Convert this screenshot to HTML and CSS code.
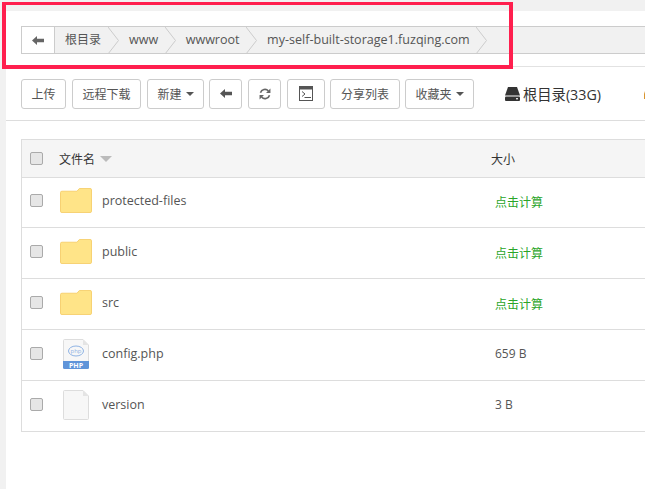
FILE: index.html
```html
<!DOCTYPE html>
<html lang="zh">
<head>
<meta charset="utf-8">
<title>文件管理</title>
<link rel="stylesheet" href="styles.css">
</head>
<body>
<div class="page">
  <nav class="crumbs">
    <button class="crumb-back"><svg width="12" height="9" viewBox="0 0 12 9"><path d="M0 4.500 5 0V2.800H12V6.200H5V9Z" fill="#666"/></svg></button>
    <ol class="crumb-list">
      <li class="crumb"><span class="crumb-cn">根目录</span><svg class="chev" width="11" height="27" viewBox="0 0 11 27"><path d="M0 0 10.500 13.500 0 27" fill="none" stroke="#ccc"/></svg></li>
      <li class="crumb"><span>www</span><svg class="chev" width="11" height="27" viewBox="0 0 11 27"><path d="M0 0 10.500 13.500 0 27" fill="none" stroke="#ccc"/></svg></li>
      <li class="crumb"><span>wwwroot</span><svg class="chev" width="11" height="27" viewBox="0 0 11 27"><path d="M0 0 10.500 13.500 0 27" fill="none" stroke="#ccc"/></svg></li>
      <li class="crumb"><span>my-self-built-storage1.fuzqing.com</span><svg class="chev" width="11" height="27" viewBox="0 0 11 27"><path d="M0 0 10.500 13.500 0 27" fill="none" stroke="#ccc"/></svg></li>
    </ol>
  </nav>
  <div class="toolbar">
    <button class="btn w-upload">上传</button>
    <button class="btn w-remote">远程下载</button>
    <button class="btn w-new">新建<i class="caret"></i></button>
    <button class="btn w-icon tight"><svg width="12" height="9" viewBox="0 0 12 9"><path d="M0 4.500 5 0V2.800H12V6.200H5V9Z" fill="#555"/></svg></button>
    <button class="btn w-icon"><svg width="12" height="12" viewBox="0 0 13 13"><path d="M1.600 5.200A5 5 0 0 1 10.200 3.200M11.400 7.800A5 5 0 0 1 2.800 9.800" fill="none" stroke="#666" stroke-width="1.700"/><path d="M12.400 .6V5.400H7.600ZM.6 12.400V7.600H5.400Z" fill="#666"/></svg></button>
    <button class="btn w-term"><svg width="14" height="15" viewBox="0 0 14 15"><rect x=".5" y=".5" width="13" height="14" fill="#fff" stroke="#555"/><rect x="1" y="1" width="12" height="2.500" fill="#555"/><path d="M3 5.500 6 8 3 10.500" fill="none" stroke="#555"/><path d="M5.500 11.500H12" stroke="#555"/></svg></button>
    <button class="btn w-share tight">分享列表</button>
    <button class="btn w-fav tight">收藏夹<i class="caret"></i></button>
    <div class="disk"><svg width="15" height="14" viewBox="0 0 15 14"><path d="M3 0H12L15 8.500H0Z" fill="#333"/><rect y="9.500" width="15" height="4.500" rx="1" fill="#333"/><rect x="11" y="11" width="2" height="1.400" fill="#ddd"/></svg><span>根目录(33G)</span></div>
    <div class="disk-next"><svg width="4" height="11" viewBox="0 0 4 11"><path d="M2 0H4V11H0V6Z" fill="#d9952f"/></svg></div>
  </div>
  <div class="files">
    <div class="row head">
      <div class="c-check"><i class="check"></i></div>
      <div class="c-name head-name">文件名<i class="sort"></i></div>
      <div class="c-size">大小</div>
    </div>
    <div class="row">
      <div class="c-check"><i class="check"></i></div>
      <div class="c-icon"><svg class="folder" width="32" height="25" viewBox="0 0 33 27" preserveAspectRatio="none"><path d="M2 3.500H17.500L20 .5H31A1.500 1.500 0 0 1 32.500 2V25A1.500 1.500 0 0 1 31 26.500H2A1.500 1.500 0 0 1 .5 25V5A1.500 1.500 0 0 1 2 3.500Z" fill="#ffe488" stroke="#f7cf6e"/></svg></div>
      <div class="c-file">protected-files</div>
      <div class="c-size calc">点击计算</div>
    </div>
    <div class="row">
      <div class="c-check"><i class="check"></i></div>
      <div class="c-icon"><svg class="folder" width="32" height="25" viewBox="0 0 33 27" preserveAspectRatio="none"><path d="M2 3.500H17.500L20 .5H31A1.500 1.500 0 0 1 32.500 2V25A1.500 1.500 0 0 1 31 26.500H2A1.500 1.500 0 0 1 .5 25V5A1.500 1.500 0 0 1 2 3.500Z" fill="#ffe488" stroke="#f7cf6e"/></svg></div>
      <div class="c-file">public</div>
      <div class="c-size calc">点击计算</div>
    </div>
    <div class="row">
      <div class="c-check"><i class="check"></i></div>
      <div class="c-icon"><svg class="folder" width="32" height="25" viewBox="0 0 33 27" preserveAspectRatio="none"><path d="M2 3.500H17.500L20 .5H31A1.500 1.500 0 0 1 32.500 2V25A1.500 1.500 0 0 1 31 26.500H2A1.500 1.500 0 0 1 .5 25V5A1.500 1.500 0 0 1 2 3.500Z" fill="#ffe488" stroke="#f7cf6e"/></svg></div>
      <div class="c-file">src</div>
      <div class="c-size calc">点击计算</div>
    </div>
    <div class="row">
      <div class="c-check"><i class="check"></i></div>
      <div class="c-icon"><svg class="doc" width="26" height="30" viewBox="0 0 26 30"><path d="M1.500 .5H20L25.500 6V28.500A1 1 0 0 1 24.500 29.500H1.500A1 1 0 0 1 .5 28.500V1.500A1 1 0 0 1 1.500 .5Z" fill="#f7f7f7" stroke="#ddd"/><path d="M20 .5V6H25.500Z" fill="#e4e4e4"/><ellipse cx="13" cy="12" rx="7.500" ry="5" fill="none" stroke="#8fb3e4"/><path d="M0 22H26V28.500A1.500 1.500 0 0 1 24.500 30H1.500A1.500 1.500 0 0 1 0 28.500Z" fill="#5f94d9"/><text class="php-big" x="13" y="29" text-anchor="middle">PHP</text><text class="php-small" x="13" y="14" text-anchor="middle">php</text></svg></div>
      <div class="c-file">config.php</div>
      <div class="c-size">659 B</div>
    </div>
    <div class="row">
      <div class="c-check"><i class="check"></i></div>
      <div class="c-icon"><svg class="doc" width="26" height="30" viewBox="0 0 26 30"><path d="M1.500 .5H20L25.500 6V28.500A1 1 0 0 1 24.500 29.500H1.500A1 1 0 0 1 .5 28.500V1.500A1 1 0 0 1 1.500 .5Z" fill="#f7f7f7" stroke="#ddd"/><path d="M20 .5V6H25.500Z" fill="#e4e4e4"/></svg></div>
      <div class="c-file">version</div>
      <div class="c-size">3 B</div>
    </div>
  </div>
</div>
<div class="highlight"></div>
</body>
</html>
```
FILE: styles.css
```css
* { box-sizing: border-box; }
html, body { margin: 0; height: 100%; overflow: hidden; }
body {
  background: #f1f1f1;
  font-family: "Open Sans", "Noto Sans CJK SC", sans-serif;
  font-size: 12px;
  color: #555;
}
.page {
  position: absolute;
  inset: 11px 0 0 6px;
  width: 660px;
  background: #fff;
  padding-top: 15px;
}
.crumbs {
  display: flex;
  height: 28px;
  margin-left: 15px;
  border: 1px solid #ccc;
  border-right: 0;
  background: #f1f1f1;
}
.crumb-back {
  width: 33px;
  flex: none;
  border: 0;
  border-right: 1px solid #ccc;
  background: #fff;
  padding: 0;
  display: flex;
  align-items: center;
  justify-content: center;
}
.crumb-list { display: flex; list-style: none; margin: 0; padding: 0; }
.crumb { display: flex; align-items: center; padding-left: 10px; gap: 6.500px; }
.crumb:first-child { gap: 7px; }
.crumb span { line-height: 26px; font-size: 12.550px; color: #555; }
.crumb .crumb-cn { font-size: 12px; }
.chev { flex: none; margin: -1px 0; }
.toolbar {
  display: flex;
  align-items: center;
  margin-top: 12px;
  height: 55px;
  padding: 0 0 0 15px;
  border-top: 1px solid #e2e2e2;
  border-bottom: 1px solid #ddd;
  gap: 6px;
}
.btn {
  height: 30px;
  flex: none;
  padding: 0;
  border: 1px solid #ccc;
  border-radius: 3px;
  background: #fff;
  font: inherit;
  color: #555;
  display: flex;
  align-items: center;
  justify-content: center;
}
.tight { margin-left: -1px; }
.w-upload { width: 45px; }
.w-remote { width: 69px; }
.w-new { width: 57px; }
.w-icon { width: 33px; }
.w-term { width: 38px; }
.w-share { width: 70px; }
.w-fav { width: 69px; }
.caret {
  margin-left: 4px;
  border-top: 4px solid #555;
  border-left: 4px solid transparent;
  border-right: 4px solid transparent;
}
.disk {
  display: flex;
  align-items: center;
  gap: 3px;
  margin-left: 25px;
  font-size: 14.300px;
  color: #333;
  width: 132px;
  flex: none;
}
.disk-next { flex: none; display: flex; margin-left: 1px; }
.files {
  margin: 18px 0 0 15px;
  border: 1px solid #ddd;
  border-right: 0;
}
.row {
  display: flex;
  align-items: center;
  height: 51px;
  padding-bottom: 3px;
  border-top: 1px solid #ddd;
}
.row:first-child { border-top: 0; }
.head { height: 37px; padding-bottom: 0; background: #f5f5f5; }
.head + .row { height: 50px; padding-bottom: 4px; }
.c-check { width: 37px; flex: none; padding-left: 8px; display: flex; }
.check {
  width: 13px;
  height: 13px;
  border: 1px solid #aaa;
  border-radius: 2px;
  background: #e6e6e6;
}
.head-name { width: 432px; flex: none; color: #333; display: flex; align-items: center; }
.c-icon { width: 43px; flex: none; display: flex; padding-left: 1px; }
.doc { margin-left: 3px; }
.c-file { width: 389px; flex: none; font-size: 12.500px; }
.c-size { flex: none; color: #333; }
.row:not(.head) .c-size { padding-left: 4px; color: #555; }
.row:not(.head) .calc { color: #2aa52a; position: relative; top: 1px; }
.sort {
  margin-left: 5px;
  border-top: 6px solid #bbb;
  border-left: 6px solid transparent;
  border-right: 6px solid transparent;
}
.php-big { font: bold 7px "Open Sans", sans-serif; fill: #fff; }
.php-small { font: 6px "Open Sans", sans-serif; fill: #8fb3e4; }
.highlight {
  position: absolute;
  left: 2px;
  top: 2px;
  width: 511px;
  height: 67px;
  border: 4px solid #ff1f4e;
  border-top-width: 3px;
}
```
